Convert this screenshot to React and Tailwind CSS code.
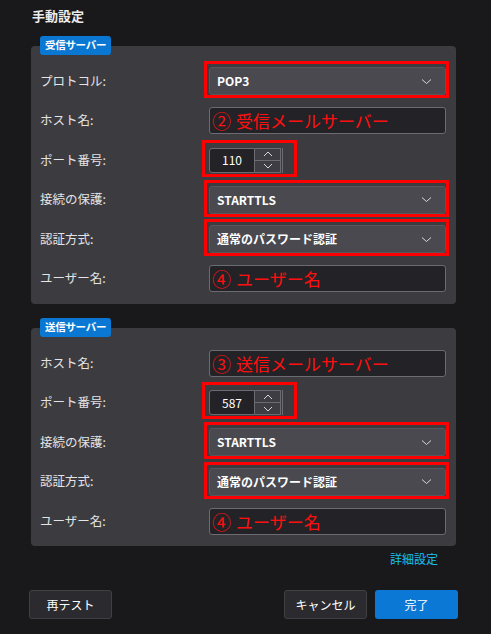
const FONT = { fontFamily: '"Noto Sans CJK JP", "Noto Sans", sans-serif' };

function Chevron() {
  return (
    <svg width="11" height="7" viewBox="0 0 11 7" className="shrink-0">
      <polyline points="1,1.5 5.5,5.5 10,1.5" fill="none" stroke="#d8d8dc" strokeWidth="1" />
    </svg>
  );
}

function Mark({ className }) {
  // 赤枠の注記
  return <div className={`pointer-events-none absolute border-[3px] border-[#ff0000] ${className}`} />;
}

function Select({ value, mark }) {
  return (
    <div className="relative w-[237px]">
      <div className="flex h-[28px] items-center justify-between rounded-[3px] border border-[#57565c] bg-[#4a494f] pl-[7px] pr-[13px]">
        <span className="text-[12px] font-bold text-white">{value}</span>
        <Chevron />
      </div>
      {mark && <Mark className="-left-[5px] -right-[3px] -top-[6px] -bottom-[3px]" />}
    </div>
  );
}

function Input({ num, note }) {
  return (
    <div className="flex h-[27px] w-[237px] items-center gap-[5px] rounded-[3px] border border-[#6c6b71] bg-[#232226] pl-[2px] text-[#ff1010]">
      <span className="text-[19px] leading-none">{num}</span>
      <span className="text-[17px] font-normal leading-none">{note}</span>
    </div>
  );
}

function Port({ value }) {
  return (
    <div className="relative flex h-[25px] w-[74px] items-stretch">
      <div className="flex w-[46px] items-center justify-center rounded-l-[3px] border border-[#6c6b71] bg-[#232226] text-[12px] text-white">
        {value}
      </div>
      <div className="flex w-[26px] flex-col border-y border-r border-[#6c6b71] bg-[#3e3d43]">
        <div className="flex flex-1 items-center justify-center border-b border-[#6c6b71]">
          <svg width="10" height="6" viewBox="0 0 10 6">
            <polyline points="1,5 5,1 9,5" fill="none" stroke="#d8d8dc" strokeWidth="1" />
          </svg>
        </div>
        <div className="flex flex-1 items-center justify-center">
          <svg width="10" height="6" viewBox="0 0 10 6">
            <polyline points="1,1 5,5 9,1" fill="none" stroke="#d8d8dc" strokeWidth="1" />
          </svg>
        </div>
      </div>
      <div className="ml-[1px] w-[1px] bg-[#6c6b71]" />
      <Mark className="-left-[7px] -right-[14px] -top-[8px] -bottom-[4px]" />
    </div>
  );
}

function Row({ label, children }) {
  return (
    <div className="flex items-center">
      <span className="w-[169px] text-[12.5px] text-[#e4e4e6]">{label}</span>
      {children}
    </div>
  );
}

function Section({ badge, children }) {
  return (
    <div className="flex flex-col">
      <span className="relative z-10 ml-[9px] flex h-[19px] w-fit items-center rounded-[3px] bg-[#0a78d2] px-[5px] text-[10.5px] font-bold tracking-[-0.3px] text-white">
        {badge}
      </span>
      <div className="-mt-[9px] grid auto-rows-[39.5px] rounded-[4px] bg-[#3c3b40] pb-[5px] pl-[9px] pt-[16px]">
        {children}
      </div>
    </div>
  );
}

export default function App() {
  return (
    <div className="h-[634px] w-[491px] overflow-hidden bg-[#19191c]" style={FONT}>
      <div className="px-[31px] pt-[6px]">
        <h1 className="ml-[1px] text-[13px] font-bold text-[#ececee]">手動設定</h1>

        {/* 受信サーバー */}
        <div className="mt-[10px] w-[425px]">
          <Section badge="受信サーバー">
            <Row label="プロトコル:"><Select value="POP3" mark /></Row>
            <Row label="ホスト名:"><Input num="②" note="受信メールサーバー" /></Row>
            <Row label="ポート番号:"><Port value="110" /></Row>
            <Row label="接続の保護:"><Select value="STARTTLS" mark /></Row>
            <Row label="認証方式:"><Select value="通常のパスワード認証" mark /></Row>
            <Row label="ユーザー名:"><Input num="④" note="ユーザー名" /></Row>
          </Section>
        </div>

        {/* 送信サーバー */}
        <div className="mt-[14px] w-[425px]">
          <Section badge="送信サーバー">
            <Row label="ホスト名:"><Input num="③" note="送信メールサーバー" /></Row>
            <Row label="ポート番号:"><Port value="587" /></Row>
            <Row label="接続の保護:"><Select value="STARTTLS" mark /></Row>
            <Row label="認証方式:"><Select value="通常のパスワード認証" mark /></Row>
            <Row label="ユーザー名:"><Input num="④" note="ユーザー名" /></Row>
          </Section>
        </div>

        <div className="mt-[4px] flex w-[407px] justify-end">
          <span className="text-[12px] text-[#19bfee]">詳細設定</span>
        </div>
      </div>

      <div className="mt-[22px] flex items-center px-[29px]">
        <button className="h-[29px] w-[83px] rounded-[3px] border border-[#3f3f44] bg-[#2b2b2f] text-[12px] text-white">
          再テスト
        </button>
        <button className="ml-auto h-[29px] w-[83px] rounded-[3px] border border-[#3f3f44] bg-[#2b2b2f] text-[12px] text-white">
          キャンセル
        </button>
        <button className="ml-[8px] mr-[4px] h-[29px] w-[83px] rounded-[3px] bg-[#0a78d4] text-[12px] text-white">
          完了
        </button>
      </div>
    </div>
  );
}
